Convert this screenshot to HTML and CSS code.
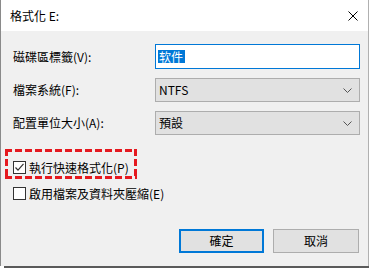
FILE: index.html
```html
<!DOCTYPE html>
<html lang="zh-Hant">
<head>
<meta charset="utf-8">
<link rel="stylesheet" href="styles.css">
</head>
<body>
<div class="dialog">
  <div class="titlebar">
    <span class="title">格式化 E:</span>
    <svg class="close" width="10" height="10" viewBox="0 0 10 10"><path d="M0.5 0.5L9.5 9.5M9.5 0.5L0.5 9.5" stroke="#000" stroke-width="1"/></svg>
  </div>
  <div class="content">
    <div class="form">
      <label class="label">磁碟區標籤(V):</label>
      <div class="input"><span class="sel">软件</span></div>
      <label class="label">檔案系統(F):</label>
      <div class="select"><span>NTFS</span><svg class="chev" width="9" height="5" viewBox="0 0 9 5"><path d="M0.5 0.5L4.5 4.5L8.5 0.5" fill="none" stroke="#555" stroke-width="1"/></svg></div>
      <label class="label">配置單位大小(A):</label>
      <div class="select"><span>預設</span><svg class="chev" width="9" height="5" viewBox="0 0 9 5"><path d="M0.5 0.5L4.5 4.5L8.5 0.5" fill="none" stroke="#555" stroke-width="1"/></svg></div>
    </div>
    <div class="highlight">
      <div class="check">
        <span class="box"><svg width="11" height="11" viewBox="0 0 11 11"><path d="M1.5 5.5L4 8.2L9.5 1.8" fill="none" stroke="#333" stroke-width="1.2"/></svg></span>
        <span class="ctext">執行快速格式化(P)</span>
      </div>
    </div>
    <div class="check second">
      <span class="box"></span>
      <span class="ctext">啟用檔案及資料夾壓縮(E)</span>
    </div>
    <div class="buttons">
      <button class="btn primary">確定</button>
      <button class="btn">取消</button>
    </div>
  </div>
</div>
<div class="shadow"></div>
</body>
</html>
```
FILE: styles.css
```css
html, body {
  margin: 0;
  padding: 0;
  background: #ffffff;
}
body {
  font-family: "Noto Sans CJK TC", "Noto Sans", sans-serif;
  font-size: 12px;
  color: #000;
  width: 373px;
  height: 268px;
  overflow: hidden;
}
.dialog {
  width: 367px;
  height: 266px;
  border-left: 1px solid #8a8a8a;
  border-right: 1px solid #b0b0b0;
  display: flex;
  flex-direction: column;
  box-sizing: content-box;
}
.titlebar {
  height: 31px;
  background: #fff;
  display: flex;
  align-items: center;
  justify-content: space-between;
  padding: 0 10px 0 9px;
  flex: none;
}
.title {
  font-size: 12px;
  line-height: 14px;
}
.close {
  display: block;
}
.content {
  flex: 1;
  background: #f0f0f0;
  padding: 13px 9px 0 12px;
  display: flex;
  flex-direction: column;
}
.form {
  display: grid;
  grid-template-columns: 142px 205px;
  row-gap: 9px;
  align-items: center;
}
.label {
  line-height: 14px;
}
.input {
  height: 25px;
  box-sizing: border-box;
  border: 1px solid #0078d7;
  background: #fff;
  display: flex;
  align-items: center;
  padding-left: 2px;
}
.sel {
  background: #0078d7;
  color: #fff;
  line-height: 14px;
  height: 13px;
  padding: 0 2px 0 1px;
  display: flex;
  align-items: center;
}
.select {
  height: 24px;
  box-sizing: border-box;
  border: 1px solid #adadad;
  background: #e1e1e1;
  display: flex;
  align-items: center;
  justify-content: space-between;
  padding: 0 7px 0 3px;
}
.select span {
  line-height: 14px;
}
.chev {
  display: block;
}
.highlight {
  --red: #e5191f;
  margin: 14px 0 0 -8px;
  width: 132px;
  height: 30px;
  box-sizing: border-box;
  padding: 12px 0 0 8px;
  background:
    repeating-linear-gradient(90deg, var(--red) 0 7px, transparent 7px 10px) left top / 100% 3px no-repeat,
    repeating-linear-gradient(90deg, var(--red) 0 7px, transparent 7px 10px) left bottom / 100% 3px no-repeat,
    repeating-linear-gradient(180deg, var(--red) 0 7px, transparent 7px 10px) left top / 3px 100% no-repeat,
    repeating-linear-gradient(180deg, var(--red) 0 7px, transparent 7px 10px) right top / 3px 100% no-repeat;
}
.check {
  display: flex;
  align-items: center;
  height: 13px;
  gap: 3px;
}
.second {
  margin-top: 8px;
}
.box {
  width: 13px;
  height: 13px;
  box-sizing: border-box;
  border: 1px solid #333;
  background: #fff;
  display: flex;
  align-items: center;
  justify-content: center;
  flex: none;
}
.box svg {
  display: block;
}
.ctext {
  line-height: 14px;
  white-space: nowrap;
}
.buttons {
  margin-top: 29px;
  display: flex;
  justify-content: flex-end;
  gap: 9px;
}
.btn {
  font-family: "Noto Sans CJK TC", "Noto Sans", sans-serif;
  font-size: 12px;
  color: #000;
  height: 24px;
  width: 86px;
  box-sizing: border-box;
  border: 1px solid #adadad;
  background: #e1e1e1;
  padding: 0;
  margin: 0;
  line-height: 14px;
}
.btn.primary {
  width: 85px;
  border: 2px solid #0078d7;
}
.shadow {
  margin-left: 4px;
  width: 365px;
  height: 2px;
  background: #5a5a5a;
}
```
